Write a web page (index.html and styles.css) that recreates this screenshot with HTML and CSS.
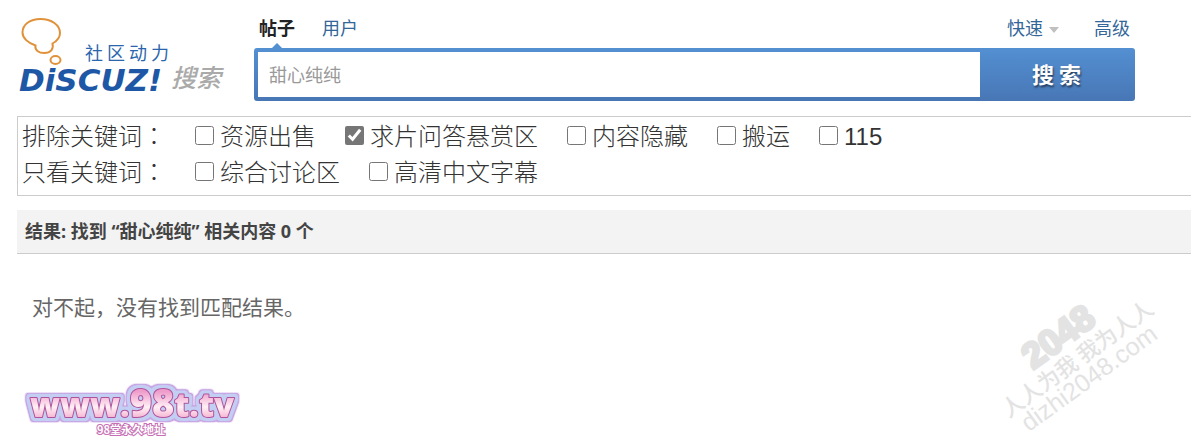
FILE: index.html
```html
<!doctype html>
<html lang="zh-CN">
<head>
<meta charset="UTF-8">
<title>搜索</title>
<meta name="viewport" content="width=device-width, initial-scale=1.0">
<link rel="stylesheet" href="styles.css">
</head>
<body>
<form class="search">
  <div class="header">
    <a class="logo" href="#" aria-label="Discuz! 搜索">
      <svg width="220" height="84" viewBox="0 0 220 84">
        <g fill="none" stroke="#e0923a" stroke-width="2">
          <path d="M18.500 29.500C11 27 5.500 22 5.500 16.500C5.500 8.500 13 3 23.500 3C34.500 3 43 9 43 17C43 21 40 25 35.500 27.500C37 33 33.500 37 27.500 37C21.500 37 17.500 34 18.500 29.500Z"/>
          <ellipse cx="38.500" cy="44" rx="5" ry="4"/>
        </g>
        <text class="logo-sub" x="68" y="44">社 区 动 力</text>
        <text class="logo-name" x="2" y="75">DiSCUZ!</text>
        <text class="logo-search" x="154" y="71">搜索</text>
      </svg>
    </a>
    <div class="main">
      <div class="tabs">
        <a class="current" href="#">帖子</a>
        <a href="#">用户</a>
        <a class="quick" href="#">快速<i class="arrow"></i></a>
        <a href="#">高级</a>
      </div>
      <div class="bar">
        <input class="keyword" type="text" value="甜心纯纯" aria-label="搜索">
        <button class="submit" type="submit">搜 索</button>
      </div>
    </div>
  </div>

  <div class="filters">
    <div class="row">
      <span class="name" lang="zh-TW">排除关键词：</span>
      <label><input type="checkbox">资源出售</label>
      <label><input type="checkbox" checked>求片问答悬赏区</label>
      <label><input type="checkbox">内容隐藏</label>
      <label><input type="checkbox">搬运</label>
      <label><input type="checkbox">115</label>
    </div>
    <div class="row">
      <span class="name" lang="zh-TW">只看关键词：</span>
      <label><input type="checkbox">综合讨论区</label>
      <label><input type="checkbox">高清中文字幕</label>
    </div>
  </div>
</form>

<h2 class="result">结果: 找到 “甜心纯纯” 相关内容 0 个</h2>
<p class="empty">对不起，没有找到匹配结果。</p>

<a class="site" href="#">
  <svg width="226" height="62" viewBox="0 0 226 62">
    <defs>
      <linearGradient id="pink" x1="0" y1="0" x2="0" y2="1">
        <stop offset="0.300" stop-color="#ee9dcb"/>
        <stop offset="0.600" stop-color="#fff0f5"/>
        <stop offset="0.800" stop-color="#f5b5d3"/>
      </linearGradient>
      <!-- soft rounded rim: purple edge, light blue inside -->
      <filter id="rim" x="-10%" y="-30%" width="120%" height="160%" color-interpolation-filters="sRGB">
        <feMorphology in="SourceAlpha" operator="dilate" radius="3" result="wide"/>
        <feGaussianBlur in="wide" stdDeviation="1"/>
        <feComponentTransfer result="edge-shape"><feFuncA type="linear" slope="4"/></feComponentTransfer>
        <feFlood flood-color="#c79ee2"/>
        <feComposite in2="edge-shape" operator="in" result="edge"/>
        <feMorphology in="SourceAlpha" operator="dilate" radius="2" result="near"/>
        <feGaussianBlur in="near" stdDeviation="1"/>
        <feComponentTransfer result="halo-shape"><feFuncA type="linear" slope="3"/></feComponentTransfer>
        <feFlood flood-color="#c3cff2"/>
        <feComposite in2="halo-shape" operator="in" result="halo"/>
        <feMerge>
          <feMergeNode in="edge"/>
          <feMergeNode in="halo"/>
          <feMergeNode in="SourceGraphic"/>
        </feMerge>
      </filter>
    </defs>
    <text class="site-name" x="10" y="40" filter="url(#rim)">www.<tspan class="big">98</tspan>t.tv</text>
    <text class="site-sub" x="77" y="57">98堂永久地址</text>
  </svg>
</a>

<div class="watermark">
  <svg width="201" height="154" viewBox="0 0 201 154">
    <g transform="rotate(-36 16 128)">
      <text class="year" x="66" y="105">2048</text>
      <text class="motto" x="18" y="130">人人为我 我为人人</text>
      <text class="domain" x="26" y="153">dizhi2048.com</text>
    </g>
  </svg>
</div>
</body>
</html>
```
FILE: styles.css
```css
body { margin: 0; background: #fff; color: #444; font-family: "Open Sans", "Noto Sans CJK SC", sans-serif; font-size: 18px; position: relative; overflow-x: hidden; }
a { color: #369; text-decoration: none; }

.header { display: flex; margin-left: 17px; padding: 16px 56px 15px 0; }
.logo { width: 237px; flex: none; }
.logo svg, .site svg, .watermark svg { display: block; }
.logo-sub { font: 18px "Noto Sans CJK SC", sans-serif; fill: #2b66ad; }
.logo-name { font: italic bold 31px "DejaVu Sans", sans-serif; fill: #1d57a5; }
.logo-search { font: italic 500 25px "Noto Sans CJK SC", sans-serif; fill: #aaa; }

.main { flex: 1; max-width: 881px; }
.tabs { display: flex; height: 32px; line-height: 24px; padding: 0 5px; }
.tabs a { margin-right: 27px; }
.tabs a:last-child { margin-right: 0; }
.tabs .current { color: #222; font-weight: bold; position: relative; }
.tabs .current:after { content: ""; position: absolute; left: 13px; bottom: 0; border: 5px solid transparent; border-top: 0; border-bottom-color: #5390d2; }
.tabs .quick { margin-left: auto; margin-right: 35px; }
.arrow { display: inline-block; margin-left: 6px; vertical-align: middle; border: 5px solid transparent; border-top: 6px solid #c0c0c0; border-bottom: 0; }

.bar { display: flex; height: 45px; padding: 4px 0 4px 4px; border-radius: 3px; background: linear-gradient(#5390d2, #4876b5); }
.keyword { flex: 1; min-width: 0; padding: 0 11px 2px; border: 0; background: #fff; color: #999; font: 18px "Noto Sans CJK SC", sans-serif; }
.submit { width: 155px; padding: 0 2px 4px 0; border: 0; background: none; color: #fff; font: bold 22px "Noto Sans CJK SC", sans-serif; text-shadow: 1px 2px 2px rgba(0, 0, 0, 0.5); cursor: pointer; }

.filters { margin-left: 17px; padding: 2px 4px 4px; border: 1px solid #ccc; border-right: 0; color: #333; font: 300 24px "Liberation Sans", "Noto Sans CJK SC", sans-serif; }
.row { display: flex; flex-wrap: wrap; column-gap: 29px; line-height: 36px; }
.name { font-family: "Liberation Sans", "Noto Sans CJK TC", sans-serif; }
.row label { display: flex; align-items: center; }
.row input { width: 19px; height: 19px; margin: 0 6px 4px 0; accent-color: #767676; }

.result { margin: 14px 0 0 17px; padding: 0 8px; line-height: 43px; border-bottom: 1px solid #ccc; background: #f3f3f3; font-size: 18px; font-weight: bold; }
.empty { margin: 37px 0 0 32px; color: #666; font-size: 21px; line-height: 32px; }

.site { display: block; width: 226px; margin: 54px 0 0 20px; }
.site-name { font: 800 33px "Open Sans", sans-serif; fill: url(#pink); stroke: #b0529c; stroke-width: 2px; stroke-linejoin: round; paint-order: stroke; }
.big { font-size: 38px; }
.site-sub { font: bold 11px "Noto Sans CJK SC", sans-serif; fill: #fff; stroke: #c66fb4; stroke-width: 2px; paint-order: stroke; }

.watermark { position: absolute; top: 290px; right: 0; pointer-events: none; }
.watermark text { fill: #e3e3e3; }
.year { font: bold 36px "Liberation Sans", sans-serif; stroke: #e3e3e3; stroke-width: 3px; }
.motto { font: 500 22px "Noto Sans CJK SC", sans-serif; }
.domain { font: 25px "Liberation Sans", sans-serif; }
```
